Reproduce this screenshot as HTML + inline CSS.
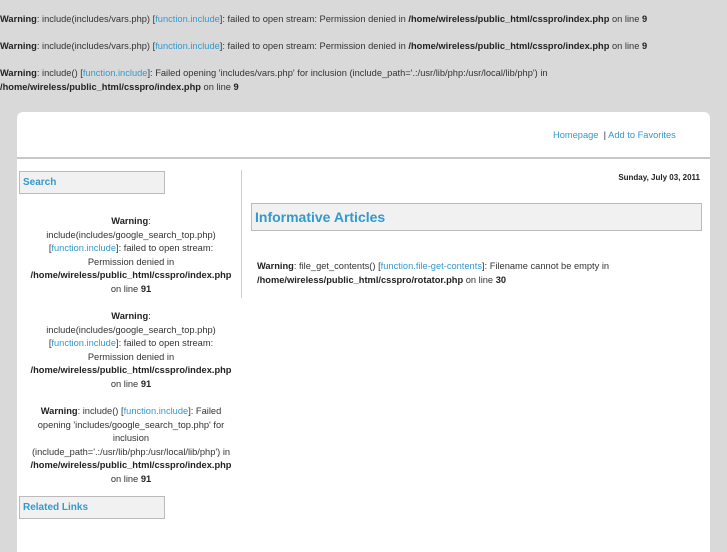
<!DOCTYPE html>
<html><head><meta charset="utf-8"><style>
body{margin:0;background:#d9d9d9;font-family:"Liberation Sans",sans-serif;font-size:9.3px;color:#333;width:727px;height:545px;overflow:hidden;position:relative}
a{color:#3399cc;text-decoration:none}
b{color:#222}
.w{position:absolute;left:0px;line-height:13.6px}
#panel{position:absolute;left:17px;top:112px;width:693px;height:440px;background:#fff;border-radius:6px 6px 0 0}
.box{position:absolute;border:1px solid #bbb;background:#f1f1f1;color:#3399cc;font-weight:bold}
.lc{position:absolute;left:20px;width:222px;text-align:center;line-height:13.6px}
</style></head><body>
<div class="w" style="top:13px"><b>Warning</b>: include(includes/vars.php) [<a>function.include</a>]: failed to open stream: Permission denied in <b>/home/wireless/public_html/csspro/index.php</b> on line <b>9</b></div>
<div class="w" style="top:40px"><b>Warning</b>: include(includes/vars.php) [<a>function.include</a>]: failed to open stream: Permission denied in <b>/home/wireless/public_html/csspro/index.php</b> on line <b>9</b></div>
<div class="w" style="top:67px"><b>Warning</b>: include() [<a>function.include</a>]: Failed opening 'includes/vars.php' for inclusion (include_path='.:/usr/lib/php:/usr/local/lib/php') in<br><b>/home/wireless/public_html/csspro/index.php</b> on line <b>9</b></div>
<div id="panel"></div>
<div style="position:absolute;left:553px;top:130px"><a>Homepage</a>&nbsp; | <a>Add to Favorites</a></div>
<div style="position:absolute;left:17px;top:157px;width:693px;height:2px;background:#c8c8c8"></div>
<div style="position:absolute;left:241px;top:170px;width:1px;height:128px;background:#ccc"></div>
<div class="box" style="left:19px;top:171px;width:141px;height:21px;font-size:10px;line-height:21px;padding-left:3px">Search</div>
<div class="box" style="left:19px;top:496px;width:141px;height:21px;font-size:10px;line-height:21px;padding-left:3px">Related Links</div>
<div class="box" style="left:251px;top:203px;width:446px;height:26px;font-size:14px;line-height:26px;padding-left:3px">Informative Articles</div>
<div style="position:absolute;right:27px;top:173px;font-weight:bold;font-size:8px;color:#222">Sunday, July 03, 2011</div>
<div style="position:absolute;left:257px;top:260px;line-height:13.6px"><b>Warning</b>: file_get_contents() [<a>function.file-get-contents</a>]: Filename cannot be empty in<br><b>/home/wireless/public_html/csspro/rotator.php</b> on line <b>30</b></div>
<div class="lc" style="top:215px"><b>Warning</b>:<br>include(includes/google_search_top.php)<br>[<a>function.include</a>]: failed to open stream:<br>Permission denied in<br><b>/home/wireless/public_html/csspro/index.php</b><br>on line <b>91</b></div>
<div class="lc" style="top:310px"><b>Warning</b>:<br>include(includes/google_search_top.php)<br>[<a>function.include</a>]: failed to open stream:<br>Permission denied in<br><b>/home/wireless/public_html/csspro/index.php</b><br>on line <b>91</b></div>
<div class="lc" style="top:405px"><b>Warning</b>: include() [<a>function.include</a>]: Failed<br>opening 'includes/google_search_top.php' for<br>inclusion<br>(include_path='.:/usr/lib/php:/usr/local/lib/php') in<br><b>/home/wireless/public_html/csspro/index.php</b><br>on line <b>91</b></div>
</body></html>
